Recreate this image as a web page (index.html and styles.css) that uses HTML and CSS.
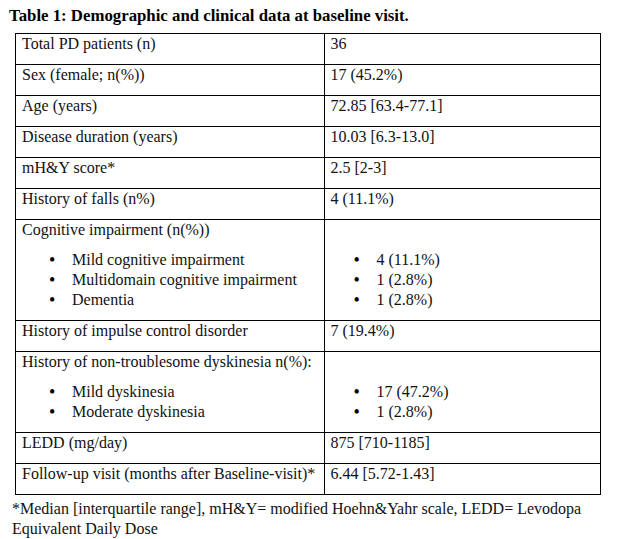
FILE: index.html
```html
<!DOCTYPE html>
<html>
<head>
<meta charset="utf-8">
<link rel="stylesheet" href="styles.css">
</head>
<body>
<div class="page">
  <h1 class="title">Table 1: Demographic and clinical data at baseline visit.</h1>
  <table class="data">
    <colgroup><col class="c1"><col class="c2"></colgroup>
    <tr><td><p>Total PD patients (n)</p></td><td><p>36</p></td></tr>
    <tr><td><p>Sex (female; n(%))</p></td><td><p>17 (45.2%)</p></td></tr>
    <tr><td><p>Age (years)</p></td><td><p>72.85 [63.4-77.1]</p></td></tr>
    <tr><td><p>Disease duration (years)</p></td><td><p>10.03 [6.3-13.0]</p></td></tr>
    <tr><td><p>mH&amp;Y score*</p></td><td><p>2.5 [2-3]</p></td></tr>
    <tr><td><p>History of falls (n%)</p></td><td><p>4 (11.1%)</p></td></tr>
    <tr>
      <td><p>Cognitive impairment (n(%))</p>
        <ul class="list"><li>Mild cognitive impairment</li><li>Multidomain cognitive impairment</li><li>Dementia</li></ul></td>
      <td><p>&nbsp;</p>
        <ul class="list list-r"><li>4 (11.1%)</li><li>1 (2.8%)</li><li>1 (2.8%)</li></ul></td>
    </tr>
    <tr><td><p>History of impulse control disorder</p></td><td><p>7 (19.4%)</p></td></tr>
    <tr>
      <td><p>History of non-troublesome dyskinesia n(%):</p>
        <ul class="list"><li>Mild dyskinesia</li><li>Moderate dyskinesia</li></ul></td>
      <td><p>&nbsp;</p>
        <ul class="list list-r"><li>17 (47.2%)</li><li>1 (2.8%)</li></ul></td>
    </tr>
    <tr><td><p>LEDD (mg/day)</p></td><td><p>875 [710-1185]</p></td></tr>
    <tr><td><p>Follow-up visit (months after Baseline-visit)*</p></td><td><p>6.44 [5.72-1.43]</p></td></tr>
  </table>
  <p class="note">*Median [interquartile range], mH&amp;Y= modified Hoehn&amp;Yahr scale, LEDD= Levodopa Equivalent Daily Dose</p>
</div>
</body>
</html>
```

FILE: styles.css
```css
html, body {
  margin: 0;
  padding: 0;
  background: #ffffff;
}
body {
  font-family: "Liberation Serif", "Times New Roman", serif;
  font-size: 16px;
  color: #111111;
}
.page {
  padding: 6px 0 0 9px;
  width: 600px;
}
.title {
  margin: 0 0 7px 0;
  font-size: 16.8px;
  font-weight: bold;
  line-height: 20px;
  color: #000;
}
.data {
  border-collapse: collapse;
  margin-left: 6px;
  width: 586px;
}
.c1 { width: 309px; }
.c2 { width: 277px; }
.data td {
  border: 1px solid #000;
  padding: 0 6px;
  vertical-align: top;
}
.data p {
  margin: 0 0 10px 0;
  line-height: 20px;
}
.list {
  list-style: none;
  margin: 0 0 10px 0;
  padding: 0 0 0 27px;
  line-height: 20px;
}
.list-r {
  padding-left: 23px;
}
.list li::before {
  content: "\2022";
  display: inline-block;
  width: 23px;
  font-size: 18px;
  line-height: 20px;
  vertical-align: top;
  color: #000;
}
.note {
  margin: 4px 0 0 3px;
  width: 585px;
  line-height: 20px;
}
```
